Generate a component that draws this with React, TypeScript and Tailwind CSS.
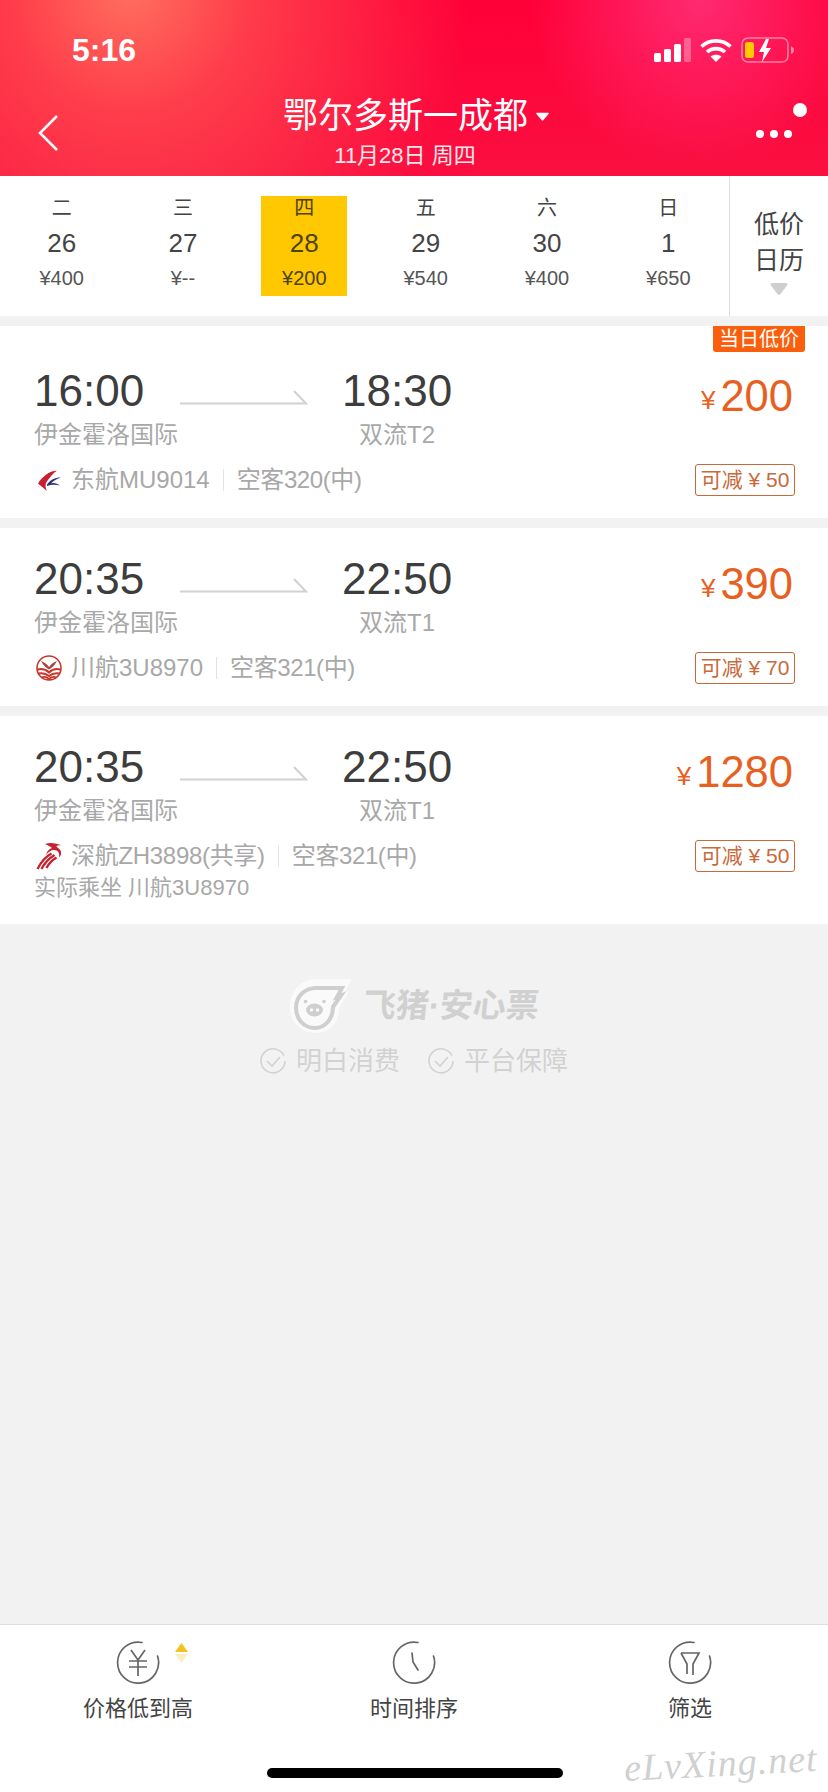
const FONT = "font-['Liberation_Sans','Noto_Sans_CJK_SC',sans-serif]";

const days = [
  { week: "二", date: "26", price: "¥400" },
  { week: "三", date: "27", price: "¥--" },
  { week: "四", date: "28", price: "¥200", active: true },
  { week: "五", date: "29", price: "¥540" },
  { week: "六", date: "30", price: "¥400" },
  { week: "日", date: "1", price: "¥650" },
];

function EasternLogo() {
  return (
    <svg viewBox="0 0 26 22" className="w-[26px] h-[22px] ml-[2px] mr-[9px] shrink-0">
      <path d="M21 1.500C13 2 6 8 2 14.500L11 22C9 18 9 14 12 11C14 8 17 4.500 21 1.500Z" fill="#c8202f" />
      <path d="M11 15.500C14 11 19 8.500 25 8.500C20 10 17 12 15 14.500C18 13.500 21 14.500 24 16.500C20 15.500 15 15.500 11 17Z" fill="#2b2f7f" />
    </svg>
  );
}

function SichuanLogo() {
  return (
    <svg viewBox="0 0 26 26" className="w-[26px] h-[26px] ml-[2px] mr-[9px] shrink-0">
      <circle cx="13" cy="13" r="12" fill="#fff" stroke="#c9352b" strokeWidth="1.600" />
      <path d="M5 6C8 7 11 9 13 12C15 9 18 7 21 6C19 10 16 13 13 14.500C10 13 7 10 5 6Z" fill="#a8453c" />
      <path d="M1.500 14.500C6 13.500 10 14.500 13 17.500C16 14.500 20 13.500 24.500 14.500" fill="none" stroke="#c9352b" strokeWidth="2" />
      <path d="M2.500 18.500C7 17.500 10 18.500 13 21C16 18.500 19 17.500 23.500 18.500" fill="none" stroke="#c9352b" strokeWidth="2" />
      <path d="M5.500 22.500C8 21.500 11 22 13 24C15 22 18 21.500 20.500 22.500" fill="none" stroke="#c9352b" strokeWidth="1.800" />
    </svg>
  );
}

function ShenzhenLogo() {
  return (
    <svg viewBox="0 0 28 28" className="w-[28px] h-[28px] ml-[2px] mr-[7px] shrink-0">
      <path d="M9 2C14 0 20 1 26 3.500C21 3 19 4 22 6C26 8 26 13 23 15.500C24 11 22 8 18 8C15 8 12 10 10 13C11 9 13 7 16 6C14 4 11 3 9 2Z" fill="#c5232f" />
      <path d="M1.500 27C5 20 9 15 15.500 11.500M5.500 27C8.500 21 12 17 18.500 13M10.500 26C13 21 15.500 18.500 20.500 15.500" fill="none" stroke="#c5232f" strokeWidth="2.400" />
    </svg>
  );
}

function RouteArrow() {
  return (
    <svg viewBox="0 0 128 16" className="w-[128px] h-[16px] shrink-0 mt-[23px]">
      <path d="M0 14.500H126L114 2" fill="none" stroke="#d2d2d2" strokeWidth="2.200" />
    </svg>
  );
}

const flights = [
  {
    depart: "16:00",
    arrive: "18:30",
    to: "双流T2",
    airline: "东航MU9014",
    plane: "空客320(中)",
    price: "200",
    off: "50",
    logo: <EasternLogo />,
    pad: "pt-[40px] pb-[19px]",
    airlineTrack: "",
  },
  {
    depart: "20:35",
    arrive: "22:50",
    to: "双流T1",
    airline: "川航3U8970",
    plane: "空客321(中)",
    price: "390",
    off: "70",
    logo: <SichuanLogo />,
    pad: "pt-[26px] pb-[19px]",
    airlineTrack: "",
  },
  {
    depart: "20:35",
    arrive: "22:50",
    to: "双流T1",
    airline: "深航ZH3898(共享)",
    plane: "空客321(中)",
    price: "1280",
    off: "50",
    logo: <ShenzhenLogo />,
    pad: "pt-[26px] pb-[23px]",
    airlineTrack: "tracking-[-0.3px]",
    actual: "实际乘坐 川航3U8970",
  },
];

function FlightCard({ flight, badge }: { flight: (typeof flights)[number]; badge?: boolean }) {
  return (
    <div className={`relative bg-white flex pl-[34px] pr-[34px] ${flight.pad}`}>
      {badge && (
        <div className="absolute top-0 right-[23px] w-[92px] h-[26px] rounded-b-[3px] bg-[#f95f0c] text-white text-[20px] leading-[26px] text-center">
          当日低价
        </div>
      )}
      <div className="flex-1">
        <div className="flex h-[50px]">
          <div className="w-[146px] text-[44px] leading-[50px] text-[#3d3d3d]">{flight.depart}</div>
          <RouteArrow />
          <div className="w-[110px] ml-[34px] text-center text-[44px] leading-[50px] text-[#3d3d3d] whitespace-nowrap">
            {flight.arrive}
          </div>
        </div>
        <div className="flex h-[38px] text-[24px] leading-[38px] text-[#a8a8a8]">
          <div className="w-[274px] whitespace-nowrap">伊金霍洛国际</div>
          <div className="w-[110px] ml-[34px] text-center whitespace-nowrap">{flight.to}</div>
        </div>
        <div className="flex items-center h-[38px] mt-[7px] text-[24px] text-[#a8a8a8] whitespace-nowrap">
          {flight.logo}
          <span className={flight.airlineTrack}>{flight.airline}</span>
          <span className="w-px h-[22px] bg-[#e2e2e2] mx-[13px]" />
          <span className="tracking-[-0.4px]">{flight.plane}</span>
        </div>
        {flight.actual && (
          <div className="h-[26px] text-[22px] leading-[26px] text-[#a8a8a8] whitespace-nowrap">{flight.actual}</div>
        )}
      </div>
      <div className="flex flex-col items-end">
        <div className="flex items-baseline h-[50px] mt-[5px] mr-[1px] text-[#e8601f] whitespace-nowrap">
          <span className="text-[26px] mr-[5px] -translate-y-[2px]">¥</span>
          <span className="text-[43.5px] leading-[50px]">{flight.price}</span>
        </div>
        <div className="mt-[43px] -mr-[1px] flex items-center justify-center w-[100px] h-[32px] rounded-[3px] border border-[#c8693a] text-[#c8693a] text-[21px] whitespace-nowrap">
          可减 ¥ {flight.off}
        </div>
      </div>
    </div>
  );
}

function RingIcon({ children }: { children: React.ReactNode }) {
  return (
    <svg viewBox="0 0 44 44" className="w-[44px] h-[44px]" fill="none" stroke="#666" strokeWidth="1.700">
      <path d="M26 2.500A20.500 20.500 0 1 0 41.500 16" strokeLinecap="round" />
      {children}
    </svg>
  );
}

function CheckRing() {
  return (
    <svg viewBox="0 0 26 26" className="w-[26px] h-[26px]" fill="none" stroke="#d2d2d2" strokeWidth="1.600">
      <path d="M24 8A12 12 0 1 0 25 13" />
      <path d="M7 13L12 18L20 9" />
    </svg>
  );
}

export default function App() {
  return (
    <div className={`${FONT} relative w-[828px] h-[1792px] flex flex-col bg-[#f2f2f2] overflow-hidden`}>
      <header className="h-[176px] shrink-0 text-white bg-[radial-gradient(circle_at_130px_-10px,#ff6f5e_0,rgba(255,80,80,0.75)_120px,rgba(255,0,57,0)_340px),radial-gradient(circle_at_700px_0px,#ff2a72_0,rgba(255,0,57,0)_170px),linear-gradient(180deg,#ff0038_0%,#fa0f40_100%)]">
        <div className="flex items-center justify-between h-[100px] pl-[72px] pr-[34px]">
          <div className="text-[32px] font-semibold leading-none">5:16</div>
          <div className="flex items-center gap-[9px]">
            <svg viewBox="0 0 37 24" className="w-[37px] h-[24px]">
              <rect x="0" y="15" width="7" height="9" rx="1.500" fill="#fff" />
              <rect x="10" y="11" width="7" height="13" rx="1.500" fill="#fff" />
              <rect x="20" y="6" width="7" height="18" rx="1.500" fill="#fff" />
              <rect x="30" y="0" width="7" height="24" rx="1.500" fill="#ffffff" fillOpacity="0.3" />
            </svg>
            <svg viewBox="0 0 32 24" className="w-[32px] h-[24px]" fill="none" stroke="#fff" strokeWidth="3.600">
              <path d="M1.500 8.500C9.500 1 22.500 1 30.500 8.500" />
              <path d="M7 14C12 9.500 20 9.500 25 14" />
              <path d="M16 24L10.500 18.500C13.500 16 18.500 16 21.500 18.500Z" fill="#fff" stroke="none" />
            </svg>
            <svg viewBox="0 0 53 26" className="w-[53px] h-[26px]">
              <rect x="1" y="1" width="46" height="24" rx="6" fill="none" stroke="#fff" strokeOpacity="0.45" strokeWidth="1.600" />
              <rect x="4" y="5" width="9" height="16" rx="2.500" fill="#ffc800" />
              <path d="M25 2L18 15H23L21 25L30 11H25L28 2Z" fill="#fff" />
              <path d="M50 9C52 10 53 12 53 13C53 15 52 16 50 17Z" fill="#fff" fillOpacity="0.5" />
            </svg>
          </div>
        </div>
        <div className="relative text-center">
          <div className="flex items-center justify-center h-[44px] -mt-[6px] pl-[4px]">
            <span className="text-[35px] leading-[44px] whitespace-nowrap">鄂尔多斯一成都</span>
            <svg viewBox="0 0 12 8" className="w-[13px] h-[9px] ml-[8px]">
              <path d="M1 0.500H11C11.600 0.500 12 1 11.600 1.600L6.700 7.400C6.300 7.800 5.700 7.800 5.300 7.400L0.400 1.600C0 1 0.400 0.500 1 0.500Z" fill="#fff" />
            </svg>
          </div>
          <div className="text-[22px] leading-[30px] mt-[3px] pr-[18px] text-white/90 whitespace-nowrap">11月28日 周四</div>
          <svg viewBox="0 0 24 38" className="absolute left-[36px] top-[20px] w-[24px] h-[38px]" fill="none" stroke="#fff" strokeWidth="2.500">
            <path d="M21 2L4 19L21 36" />
          </svg>
          <div className="absolute left-[756px] top-[36px] flex gap-[6px]">
            <span className="w-[8px] h-[8px] rounded-full bg-white" />
            <span className="w-[8px] h-[8px] rounded-full bg-white" />
            <span className="w-[8px] h-[8px] rounded-full bg-white" />
          </div>
          <span className="absolute left-[793px] top-[9px] w-[14px] h-[14px] rounded-full bg-white" />
        </div>
      </header>

      <div className="flex h-[140px] shrink-0 bg-white">
        <div className="grid grid-cols-6 w-[730px] border-r border-[#dedede] pl-[1px] pt-[20px]">
          {days.map((day) => (
            <div key={day.week} className="flex justify-center">
              <div className={`w-[86px] h-[100px] text-center whitespace-nowrap ${day.active ? "bg-[#ffc800] text-[#4d4214]" : "text-[#444]"}`}>
                <div className="text-[20px] leading-[24px]">{day.week}</div>
                <div className="text-[26px] leading-[38px] mt-[4px]">{day.date}</div>
                <div className={`text-[20px] leading-[26px] mt-[3px] ${day.active ? "" : "text-[#555]"}`}>{day.price}</div>
              </div>
            </div>
          ))}
        </div>
        <div className="flex-1 flex flex-col items-center pt-[30px] text-[25px] leading-[36px] text-[#444]">
          <div>低价</div>
          <div>日历</div>
          <svg viewBox="0 0 18 12" className="w-[18px] h-[12px] mt-[5px]">
            <path d="M2 0H16C17.500 0 18 1.500 17 2.500L10.500 11C9.800 12 8.200 12 7.500 11L1 2.500C0 1.500 0.500 0 2 0Z" fill="#cfcfcf" />
          </svg>
        </div>
      </div>

      <div className="flex flex-col gap-[10px] mt-[10px] shrink-0">
        {flights.map((flight, i) => (
          <FlightCard key={flight.airline} flight={flight} badge={i === 0} />
        ))}
      </div>

      <div className="flex-1 flex flex-col items-center pt-[55px]">
        <div className="flex items-center h-[54px]">
          <svg viewBox="0 0 64 54" className="w-[64px] h-[54px]">
            <path d="M27 0H63L56 13L60 12L50 30C50 44 40 54 27 54C12 54 1 43 1 28C1 12 12 0 27 0Z" fill="#fafafa" />
            <path d="M27 9H53L48 18L52 16.500L44 28C44 40 36 49 26 49C14 49 7 39 7 29C7 17 16 9 27 9Z" fill="none" stroke="#cfcfcf" strokeWidth="4" />
            <ellipse cx="25.500" cy="31" rx="8.500" ry="6.500" fill="#cfcfcf" />
            <circle cx="22.500" cy="31" r="1.700" fill="#fafafa" />
            <circle cx="28.500" cy="31" r="1.700" fill="#fafafa" />
            <circle cx="16.500" cy="22.500" r="1.800" fill="#cfcfcf" />
            <circle cx="35" cy="22.500" r="1.800" fill="#cfcfcf" />
          </svg>
          <div className="ml-[10px] text-[33px] font-bold -skew-x-6 text-[#d0d0d0] whitespace-nowrap">飞猪·安心票</div>
        </div>
        <div className="flex items-center h-[36px] mt-[10px] text-[26px] text-[#d2d2d2] whitespace-nowrap">
          <CheckRing />
          <span className="ml-[10px]">明白消费</span>
          <span className="ml-[28px]" />
          <CheckRing />
          <span className="ml-[10px]">平台保障</span>
        </div>
      </div>

      <footer className="relative h-[168px] shrink-0 bg-white border-t border-[#dedede] grid grid-cols-3 pt-[15px] text-[22px] text-[#444] text-center">
        <div className="flex flex-col items-center">
          <div className="relative">
            <RingIcon>
              <path d="M15 10L22 20L29 10M13 21H31M13 27H31M22 20V36" />
            </RingIcon>
            <svg viewBox="0 0 13 20" className="absolute left-[59px] top-[3px] w-[13px] h-[20px]">
              <path d="M6.500 0L13 9H0Z" fill="#f2c31c" />
              <path d="M0 11H13L6.500 20Z" fill="#fbeec0" />
            </svg>
          </div>
          <div className="mt-[10px] leading-[30px]">价格低到高</div>
        </div>
        <div className="flex flex-col items-center">
          <RingIcon>
            <path d="M20 13L21 22L26 30" strokeLinecap="round" />
          </RingIcon>
          <div className="mt-[10px] leading-[30px]">时间排序</div>
        </div>
        <div className="flex flex-col items-center">
          <RingIcon>
            <path d="M13 13H31L25 24V35M19 34V24L13 13" />
          </RingIcon>
          <div className="mt-[10px] leading-[30px]">筛选</div>
        </div>
        <div className="absolute left-[267px] top-[143px] w-[296px] h-[10px] rounded-full bg-black" />
        <div className="absolute left-[624px] top-[114px] -rotate-3 font-['Liberation_Serif',serif] italic text-[38px] leading-[48px] tracking-[1px] text-[#d0d0d0] whitespace-nowrap">
          eLvXing.net
        </div>
      </footer>
    </div>
  );
}
